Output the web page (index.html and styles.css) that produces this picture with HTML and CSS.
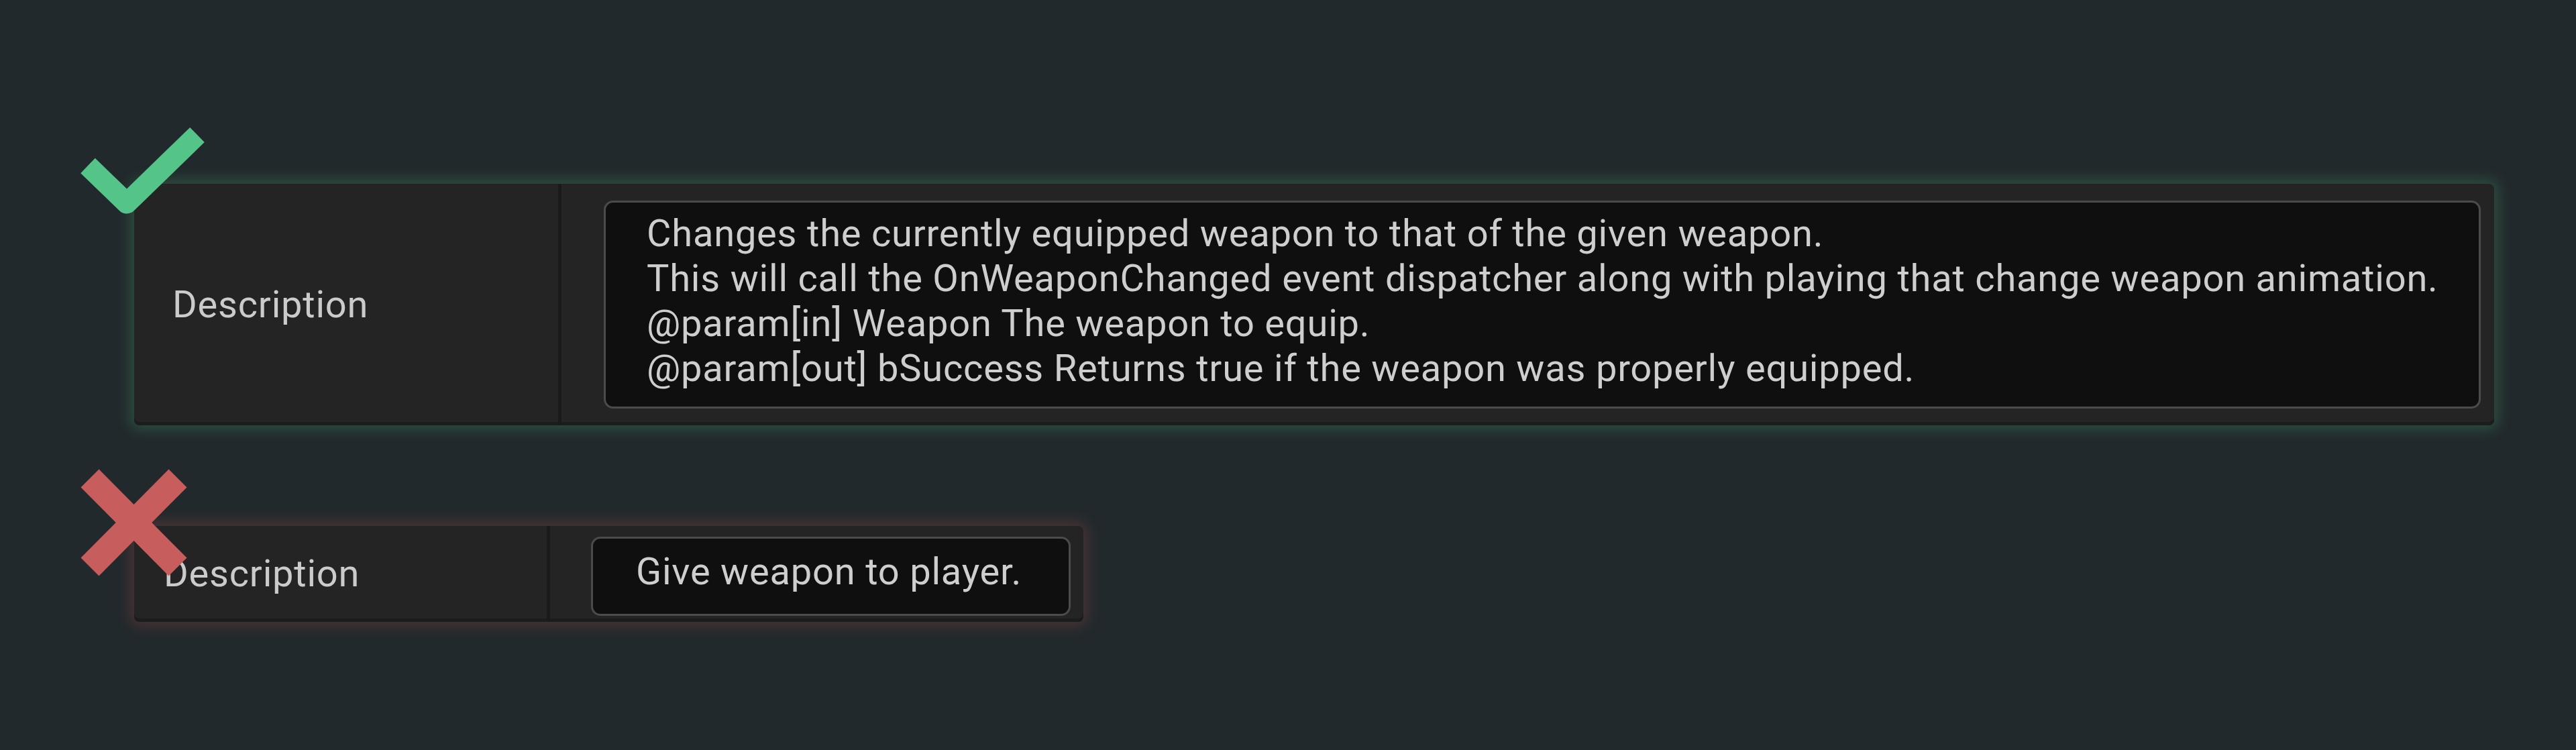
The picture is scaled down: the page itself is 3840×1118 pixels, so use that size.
FILE: index.html
```html
<!DOCTYPE html>
<html lang="en">
<head>
<meta charset="utf-8">
<title>Description examples</title>
<link rel="stylesheet" href="styles.css">
</head>
<body>
<main class="page">
  <section class="card card--good">
    <svg class="badge badge--check" viewBox="0 0 190 145" width="190" height="145" aria-hidden="true">
      <polyline points="13,58 71,114 176,12" fill="none" stroke="#55c488" stroke-width="31" stroke-linejoin="round" stroke-linecap="butt"/>
    </svg>
    <div class="label label--good">Description</div>
    <div class="divider"></div>
    <div class="value value--good">
      <div class="textbox textbox--wide">
        <div class="line">Changes the currently equipped weapon to that of the given weapon.</div>
        <div class="line">This will call the OnWeaponChanged event dispatcher along with playing that change weapon animation.</div>
        <div class="line">@param[in] Weapon The weapon to equip.</div>
        <div class="line">@param[out] bSuccess Returns true if the weapon was properly equipped.</div>
      </div>
    </div>
  </section>

  <section class="card card--bad">
    <svg class="badge badge--cross" viewBox="0 0 160 162" width="160" height="162" aria-hidden="true">
      <line x1="14" y1="15" x2="145" y2="147" stroke="#c75d5d" stroke-width="38" stroke-linecap="butt"/>
      <line x1="145" y1="15" x2="14" y2="147" stroke="#c75d5d" stroke-width="38" stroke-linecap="butt"/>
    </svg>
    <div class="label label--bad">Description</div>
    <div class="divider"></div>
    <div class="value value--bad">
      <div class="textbox textbox--short">
        <div class="line">Give weapon to player.</div>
      </div>
    </div>
  </section>
</main>
</body>
</html>
```

FILE: styles.css
```css
html, body {
  margin: 0;
  padding: 0;
}

body {
  background: #22292c;
  width: 3840px;
  height: 1118px;
  overflow: hidden;
  font-family: Roboto, "Liberation Sans", sans-serif;
  color: #cdcdcd;
}

.page {
  display: flex;
  flex-direction: column;
  align-items: flex-start;
  gap: 150px;
  padding: 274px 122px 0 200px;
}

.card {
  position: relative;
  display: flex;
  align-items: stretch;
  background: #242424;
  border-radius: 8px;
  box-shadow: inset 0 -5px 0 #1c1c1c;
}

.card--good {
  align-self: stretch;
  box-shadow: inset 0 -5px 0 #1c1c1c, 0 0 20px 6px rgba(76, 178, 122, 0.28);
}

.card--bad {
  box-shadow: inset 0 -5px 0 #1c1c1c, 0 0 20px 6px rgba(190, 80, 86, 0.26);
}

.badge {
  position: absolute;
  z-index: 2;
  display: block;
}

.badge--check {
  left: -82px;
  top: -85px;
}

.badge--cross {
  left: -80px;
  top: -86px;
}

.label {
  display: flex;
  align-items: center;
  font-size: 56px;
  line-height: 67px;
  letter-spacing: 0.8px;
  color: #cbcbcb;
  flex: none;
}

.label--good {
  width: 575px;
  padding-left: 57px;
}

.label--bad {
  width: 571px;
  padding-left: 44px;
}

.divider {
  flex: none;
  width: 5px;
  background: #1a1a1a;
}

.value {
  display: flex;
}

.value--good {
  flex: 1;
  padding: 25px 22px 25px 63px;
}

.value--bad {
  padding: 16px 19px 9px 61px;
}

.textbox {
  background: #0f0f0f;
  border: 3px solid #4b4b4b;
  border-radius: 14px;
  font-size: 56px;
  line-height: 67px;
  letter-spacing: 0.8px;
  color: #cecece;
  white-space: nowrap;
}

.textbox--wide {
  flex: 1;
  padding: 13px 60px 23px 61px;
}

.textbox--short {
  padding: 16px 70px 29px 64px;
}
```
